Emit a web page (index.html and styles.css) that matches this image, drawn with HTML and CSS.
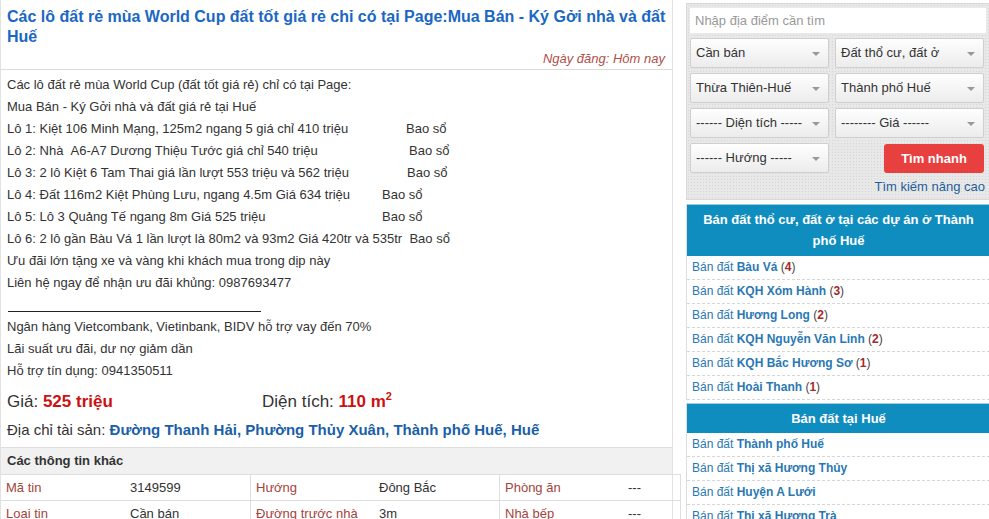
FILE: index.html
```html
<!DOCTYPE html>
<html lang="vi">
<head>
<meta charset="utf-8">
<title>Các lô đất rẻ mùa World Cup</title>
<link rel="stylesheet" href="styles.css">
</head>
<body>
<div class="page">
  <main class="main">
    <div class="head">
      <h1 class="title">Các lô đất rẻ mùa World Cup đất tốt giá rẻ chỉ có tại Page:Mua Bán - Ký Gởi nhà và đất Huế</h1>
      <div class="date">Ngày đăng: Hôm nay</div>
    </div>
    <div class="desc">
      <div>Các lô đất rẻ mùa World Cup (đất tốt giá rẻ) chỉ có tại Page:</div>
      <div>Mua Bán - Ký Gởi nhà và đất giá rẻ tại Huế</div>
      <div><span class="lt w1">Lô 1: Kiệt 106 Minh Mạng, 125m2 ngang 5 giá chỉ 410 triệu</span>Bao sổ</div>
      <div><span class="lt w2">Lô 2: Nhà &nbsp;A6-A7 Dương Thiệu Tước giá chỉ 540 triệu</span>Bao sổ</div>
      <div><span class="lt w3">Lô 3: 2 lô Kiệt 6 Tam Thai giá lần lượt 553 triệu và 562 triệu</span>Bao sổ</div>
      <div><span class="lt w4">Lô 4: Đất 116m2 Kiệt Phùng Lưu, ngang 4.5m Giá 634 triệu</span>Bao sổ</div>
      <div><span class="lt w4">Lô 5: Lô 3 Quảng Tế ngang 8m Giá 525 triệu</span>Bao sổ</div>
      <div>Lô 6: 2 lô gần Bàu Vá 1 lần lượt là 80m2 và 93m2 Giá 420tr và 535tr &nbsp;Bao sổ</div>
      <div>Ưu đãi lớn tặng xe và vàng khi khách mua trong dịp này</div>
      <div>Liên hệ ngay để nhận ưu đãi khủng: 0987693477</div>
      <div class="rule"></div>
      <div>Ngân hàng Vietcombank, Vietinbank, BIDV hỗ trợ vay đến 70%</div>
      <div>Lãi suất ưu đãi, dư nợ giảm dần</div>
      <div>Hỗ trợ tín dụng: 0941350511</div>
    </div>
    <div class="price-row">
      <div class="price">Giá: <b class="red">525 triệu</b></div>
      <div class="area">Diện tích: <b class="red">110 m<sup>2</sup></b></div>
    </div>
    <div class="addr">Địa chỉ tài sản: <a class="addr-link" href="#">Đường Thanh Hải, Phường Thủy Xuân, Thành phố Huế, Huế</a></div>
    <div class="info-head">Các thông tin khác</div>
    <div class="info">
      <div class="cell lab">Mã tin</div><div class="cell val">3149599</div>
      <div class="cell lab sep">Hướng</div><div class="cell val">Đông Bắc</div>
      <div class="cell lab sep">Phòng ăn</div><div class="cell val">---</div>
      <div class="cell lab">Loại tin</div><div class="cell val">Cần bán</div>
      <div class="cell lab sep">Đường trước nhà</div><div class="cell val">3m</div>
      <div class="cell lab sep">Nhà bếp</div><div class="cell val">---</div>
    </div>
  </main>
  <aside class="side">
    <div class="search">
      <div class="input">Nhập địa điểm cần tìm</div>
      <div class="grid">
        <div class="sel">Cần bán<i class="caret"></i></div>
        <div class="sel">Đất thổ cư, đất ở<i class="caret"></i></div>
        <div class="sel">Thừa Thiên-Huế<i class="caret"></i></div>
        <div class="sel">Thành phố Huế<i class="caret"></i></div>
        <div class="sel">------ Diện tích -----<i class="caret"></i></div>
        <div class="sel">-------- Giá ------<i class="caret"></i></div>
        <div class="sel">------ Hướng -----<i class="caret"></i></div>
        <div class="btn-wrap"><button class="btn">Tìm nhanh</button></div>
      </div>
      <div class="adv"><a href="#">Tìm kiếm nâng cao</a></div>
    </div>
    <div class="box">
      <div class="box-head">Bán đất thổ cư, đất ở tại các dự án ở Thành phố Huế</div>
      <ul class="list">
        <li><a href="#">Bán đất <b>Bàu Vá</b></a> (<b class="cnt">4</b>)</li>
        <li><a href="#">Bán đất <b>KQH Xóm Hành</b></a> (<b class="cnt">3</b>)</li>
        <li><a href="#">Bán đất <b>Hương Long</b></a> (<b class="cnt">2</b>)</li>
        <li><a href="#">Bán đất <b>KQH Nguyễn Văn Linh</b></a> (<b class="cnt">2</b>)</li>
        <li><a href="#">Bán đất <b>KQH Bắc Hương Sơ</b></a> (<b class="cnt">1</b>)</li>
        <li><a href="#">Bán đất <b>Hoài Thanh</b></a> (<b class="cnt">1</b>)</li>
      </ul>
    </div>
    <div class="box">
      <div class="box-head one">Bán đất tại Huế</div>
      <ul class="list">
        <li><a href="#">Bán đất <b>Thành phố Huế</b></a></li>
        <li><a href="#">Bán đất <b>Thị xã Hương Thủy</b></a></li>
        <li><a href="#">Bán đất <b>Huyện A Lưới</b></a></li>
        <li><a href="#">Bán đất <b>Thị xã Hương Trà</b></a></li>
      </ul>
    </div>
  </aside>
</div>
</body>
</html>
```
FILE: styles.css
```css
* { box-sizing: border-box; }
html, body { margin: 0; padding: 0; background: #fff; }
body {
  font-family: "Liberation Sans", Arial, sans-serif;
  font-size: 13px;
  color: #333;
  overflow: hidden;
}
a { text-decoration: none; }
.page {
  display: flex;
  gap: 13px;
  align-items: flex-start;
  width: 1000px;
}
.main {
  width: 673px;
  flex: none;
  border: 1px solid #e2e2e2;
  border-top: none;
  padding-top: 7px;
}
.head {
  padding: 0 4px 0 6px;
  border-bottom: 1px solid #dcdcdc;
}
.title {
  margin: 0;
  font-size: 16px;
  line-height: 20px;
  font-weight: bold;
  color: #1b67c4;
}
.date {
  text-align: right;
  font-style: italic;
  color: #b0504a;
  font-size: 13px;
  line-height: 20px;
  padding: 2px 3px 0 0;
}
.desc {
  padding: 4px 6px 0 6px;
  line-height: 22px;
}
.lt { display: inline-block; }
.w1 { width: 399px; }
.w2 { width: 402px; }
.w3 { width: 400px; }
.w4 { width: 375px; }
.rule {
  height: 22px;
  position: relative;
}
.rule::after {
  content: "";
  display: block;
  position: absolute;
  left: 1px;
  top: 17px;
  width: 253px;
  height: 1px;
  background: #222;
}
.price-row {
  display: flex;
  padding: 6px 6px 0 6px;
  font-size: 17px;
  line-height: 28px;
}
.price { width: 255px; }
.red { color: #cc1111; }
.price-row sup { font-size: 11px; line-height: 0; }
.addr {
  padding: 0 6px;
  font-size: 15px;
  line-height: 28px;
}
.addr-link { color: #1a5fa8; font-weight: bold; }
.info-head {
  margin-top: 3px;
  background: #f1f1f1;
  border-top: 1px solid #dedede;
  font-weight: bold;
  padding: 0 6px;
  line-height: 26px;
  width: 671px;
}
.info {
  display: grid;
  grid-template-columns: 124px 125px 124px 125px 124px 58px;
  width: 681px;
  border-right: 1px solid #dedede;
  margin-left: -1px;
  border-left: 1px solid #e2e2e2;
}
.cell {
  line-height: 25px;
  height: 26px;
  border-top: 1px solid #dedede;
  padding-left: 5px;
  white-space: nowrap;
}
.cell.sep { border-left: 1px solid #dedede; }
.lab { color: #a3443c; }
.val { color: #333; }
.side {
  width: 304px;
  flex: none;
  padding-top: 3px;
}
.search {
  background-color: #e8e8e8;
  background-image: radial-gradient(#d6d6d6 0.6px, transparent 0.8px);
  background-size: 3px 3px;
  border: 1px solid #d8d8d8;
  padding: 4px 3px 4px 3px;
  height: 197px;
}
.input {
  background: #fff;
  height: 25px;
  line-height: 25px;
  padding-left: 5px;
  color: #999;
  font-size: 13px;
  margin-bottom: 5px;
}
.grid {
  display: grid;
  grid-template-columns: 139px 149px;
  column-gap: 6px;
  row-gap: 5px;
}
.sel {
  position: relative;
  height: 30px;
  line-height: 28px;
  border: 1px solid #cfcfcf;
  border-radius: 2px;
  background: linear-gradient(#fefefe, #ececec);
  padding-left: 5px;
  color: #333;
  font-size: 13px;
  white-space: nowrap;
}
.caret {
  position: absolute;
  right: 8px;
  top: 13px;
  width: 0;
  height: 0;
  border-left: 4px solid transparent;
  border-right: 4px solid transparent;
  border-top: 4px solid #999;
}
.btn-wrap { display: flex; justify-content: flex-end; }
.btn {
  width: 100px;
  height: 29px;
  border: none;
  border-radius: 3px;
  background: #e8403f;
  color: #fff;
  font-family: "Liberation Sans", Arial, sans-serif;
  font-weight: bold;
  font-size: 13px;
  padding: 0;
  margin-top: 1px;
}
.adv {
  text-align: right;
  line-height: 16px;
  padding: 6px 1px 0 0;
}
.adv a { color: #1e5f9e; }
.box {
  margin-top: 4px;
  border-left: 1px solid #dcdcdc;
}
.box + .box { margin-top: 3px; }
.box-head {
  background: #0f8dbf;
  color: #fff;
  font-weight: bold;
  font-size: 13px;
  line-height: 21px;
  text-align: center;
  padding: 4px 6px 5px;
  border-top: 1px solid #9ccde4;
}
.box-head.one { padding: 4px 6px 4px; }
.list {
  list-style: none;
  margin: 0;
  padding: 0;
}
.list li {
  height: 24px;
  line-height: 23px;
  border-bottom: 1px dashed #d6d6d6;
  padding-left: 5px;
  color: #444;
  font-size: 12px;
  white-space: nowrap;
}
.list a { color: #2a78b3; }
.list a b { font-weight: bold; }
.cnt { color: #a52a2a; }
```
